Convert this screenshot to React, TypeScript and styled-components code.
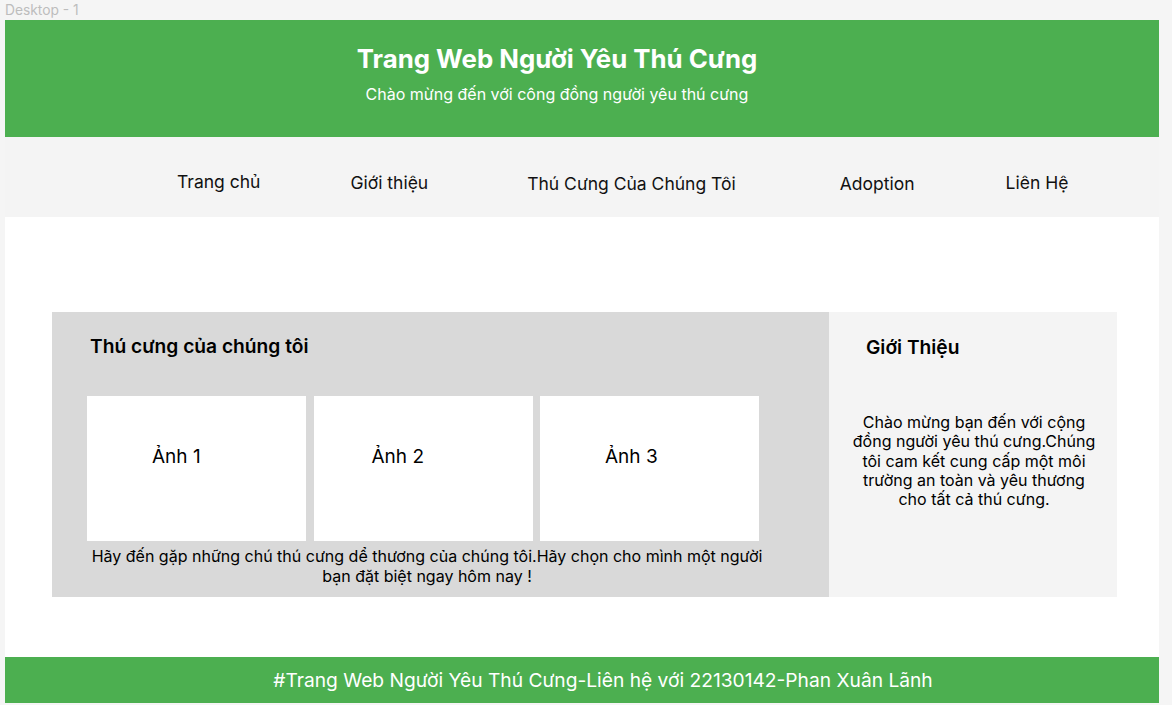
import React from "react";
import styled, { createGlobalStyle } from "styled-components";

const Global = createGlobalStyle`
  html, body { margin: 0; padding: 0; background: #f5f5f5; }
  body { font-family: Inter, "Noto Sans", sans-serif; color: #000; }
  * { box-sizing: border-box; }
`;

const Canvas = styled.div`
  width: 1172px;
  height: 705px;
  overflow: hidden;
  background: #f5f5f5;
  padding-left: 5px;
`;

const FrameLabel = styled.div`
  height: 20px;
  font-size: 13.8px;
  line-height: 20px;
  color: #bdbdbd;
`;

const Frame = styled.div`
  width: 1154px;
  display: flex;
  flex-direction: column;
  background: #f4f4f4;
`;

const Header = styled.header`
  height: 117px;
  background: #4caf50;
  color: #fff;
  display: flex;
  flex-direction: column;
  align-items: center;
  padding: 23px 50px 0 0;
`;

const Title = styled.h1`
  margin: 0;
  font-size: 25.8px;
  line-height: 32px;
  font-weight: 700;
`;

const Subtitle = styled.p`
  margin: 9px 0 0;
  font-size: 16px;
  line-height: 20px;
  font-weight: 400;
`;

const Nav = styled.nav`
  height: 80px;
  display: flex;
  align-items: flex-start;
  padding-top: 34px;
`;

const NavItem = styled.a<{ $left: number; $top: number }>`
  margin-left: ${(p) => p.$left}px;
  margin-top: ${(p) => p.$top}px;
  font-size: 17.5px;
  line-height: 22px;
  color: #111;
  text-decoration: none;
  white-space: nowrap;
`;

const Main = styled.main`
  height: 440px;
  background: #fff;
  padding: 95px 0 0 47px;
  display: flex;
  align-items: flex-start;
`;

const PetsPanel = styled.section`
  width: 777px;
  height: 285px;
  background: #d9d9d9;
  display: flex;
  flex-direction: column;
  padding: 22px 0 0 35px;
`;

const PanelTitle = styled.h2<{ $indent: number }>`
  margin: 0 0 0 ${(p) => p.$indent}px;
  font-size: 19.2px;
  line-height: 24px;
  font-weight: 600;
`;

const ImageRow = styled.div`
  display: flex;
  gap: 7.5px;
  margin-top: 38px;
`;

const ImageBox = styled.div<{ $pad: number }>`
  width: 219px;
  height: 145px;
  background: #fff;
  padding: 49px 0 0 ${(p) => p.$pad}px;
  font-size: 19px;
  line-height: 24px;
`;

const Caption = styled.p`
  width: 680px;
  margin: 5px 0 0;
  text-align: center;
  font-size: 16px;
  line-height: 20px;
`;

const AboutPanel = styled.aside`
  width: 288px;
  height: 285px;
  background: #f4f4f4;
  display: flex;
  flex-direction: column;
  padding: 23px 0 0 0;
`;

const AboutText = styled.p`
  width: 254px;
  margin: 54px 0 0 18px;
  text-align: center;
  font-size: 16px;
  line-height: 19.3px;
`;

const Footer = styled.footer`
  height: 46px;
  background: #4caf50;
  color: #fff;
  display: flex;
  align-items: center;
  justify-content: center;
  padding-left: 42px;
  font-size: 19.2px;
  line-height: 24px;
`;

const navItems = [
  { label: "Trang chủ", left: 172, top: 0 },
  { label: "Giới thiệu", left: 90, top: 1 },
  { label: "Thú Cưng Của Chúng Tôi", left: 99, top: 2 },
  { label: "Adoption", left: 104, top: 2 },
  { label: "Liên Hệ", left: 91, top: 1 },
];

const images = [
  { label: "Ảnh 1", pad: 65 },
  { label: "Ảnh 2", pad: 58 },
  { label: "Ảnh 3", pad: 65 },
];

export default function App() {
  return (
    <>
      <Global />
      <Canvas>
        <FrameLabel>Desktop - 1</FrameLabel>
        <Frame>
          <Header>
            <Title>Trang Web Người Yêu Thú Cưng</Title>
            <Subtitle>Chào mừng đến với công đồng người yêu thú cưng</Subtitle>
          </Header>
          <Nav>
            {navItems.map((n) => (
              <NavItem key={n.label} $left={n.left} $top={n.top}>
                {n.label}
              </NavItem>
            ))}
          </Nav>
          <Main>
            <PetsPanel>
              <PanelTitle $indent={3}>Thú cưng của chúng tôi</PanelTitle>
              <ImageRow>
                {images.map((img) => (
                  <ImageBox key={img.label} $pad={img.pad}>
                    {img.label}
                  </ImageBox>
                ))}
              </ImageRow>
              <Caption>
                Hãy đến gặp những chú thú cưng dể thương của chúng tôi.Hãy chọn cho mình một người
                bạn đặt biệt ngay hôm nay !
              </Caption>
            </PetsPanel>
            <AboutPanel>
              <PanelTitle $indent={37}>Giới Thiệu</PanelTitle>
              <AboutText>
                Chào mừng bạn đến với cộng đồng người yêu thú cưng.Chúng tôi cam kết cung cấp một
                môi trường an toàn và yêu thương cho tất cả thú cưng.
              </AboutText>
            </AboutPanel>
          </Main>
          <Footer>#Trang Web Người Yêu Thú Cưng-Liên hệ với 22130142-Phan Xuân Lãnh</Footer>
        </Frame>
      </Canvas>
    </>
  );
}
